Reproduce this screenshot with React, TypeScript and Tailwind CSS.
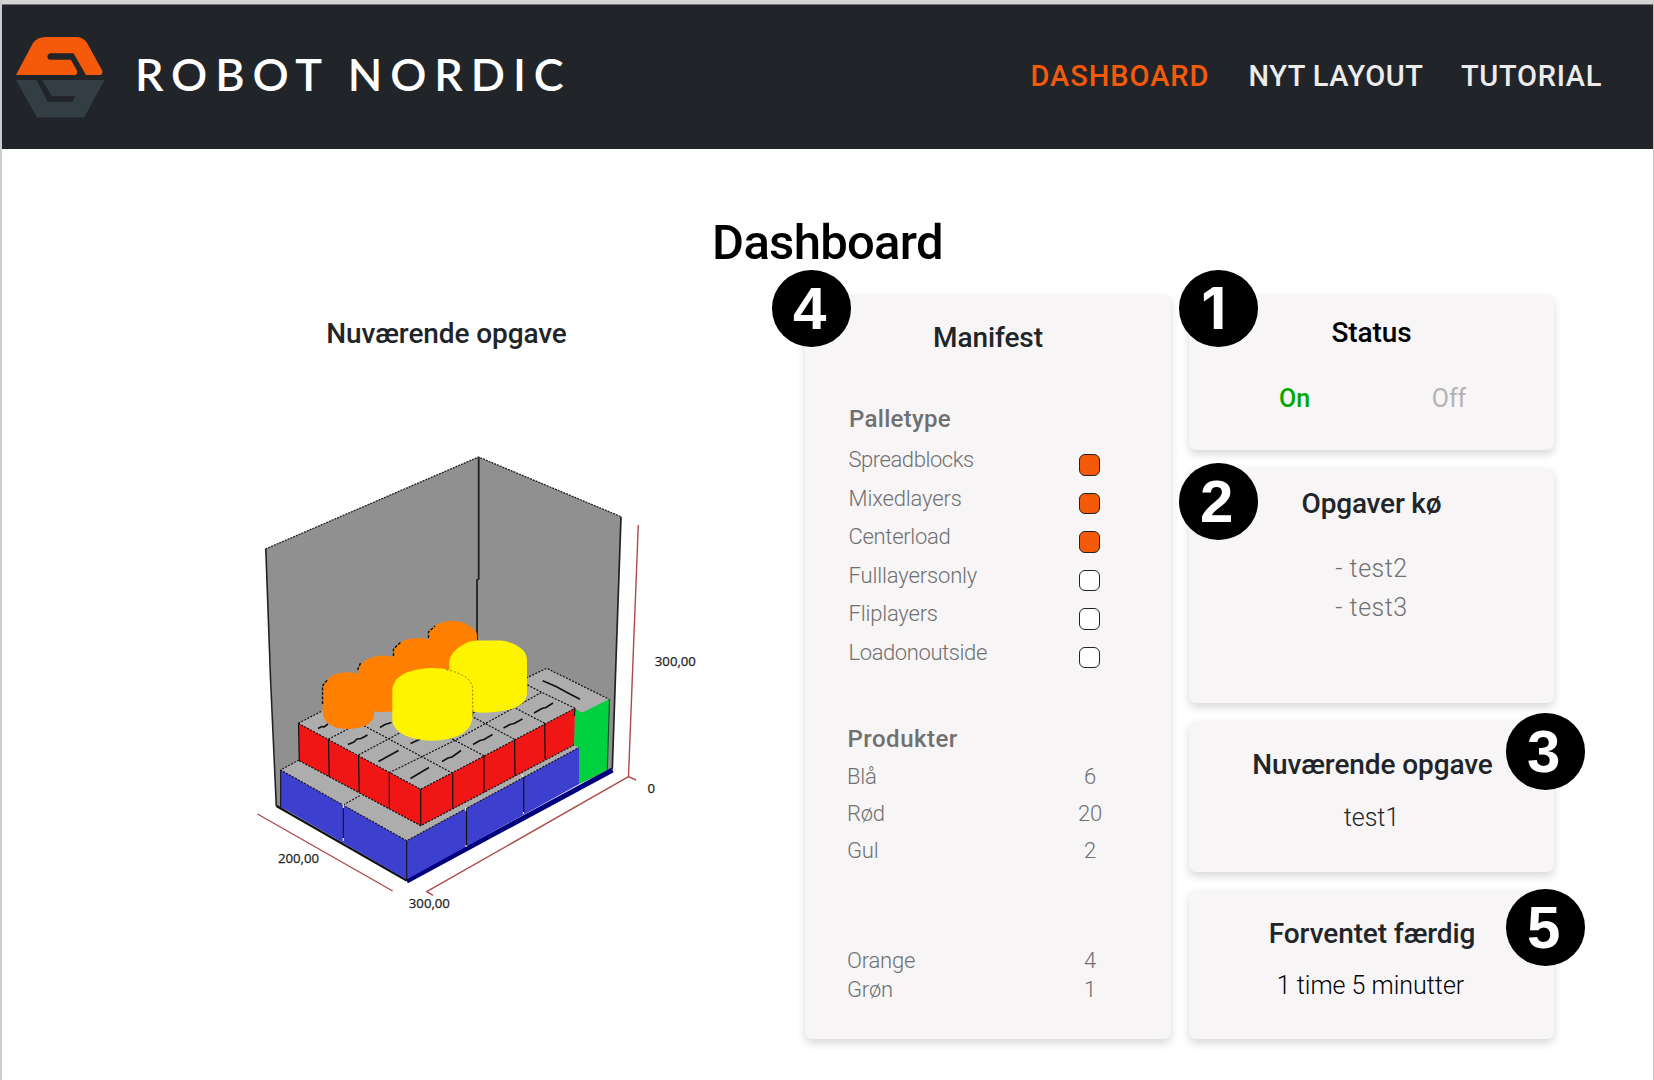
import type { ReactNode } from "react";

const palletTypes = [
  { label: "Spreadblocks", checked: true, tracking: "tracking-[-0.45px]" },
  { label: "Mixedlayers", checked: true, tracking: "tracking-[-0.15px]" },
  { label: "Centerload", checked: true, tracking: "tracking-[-0.3px]" },
  { label: "Fulllayersonly", checked: false, tracking: "tracking-[-0.15px]" },
  { label: "Fliplayers", checked: false, tracking: "tracking-[-0.2px]" },
  { label: "Loadonoutside", checked: false, tracking: "tracking-[-0.4px]" },
];

const products = [
  { label: "Blå", count: 6 },
  { label: "Rød", count: 20 },
  { label: "Gul", count: 2 },
];

const extraProducts = [
  { label: "Orange", count: 4 },
  { label: "Grøn", count: 1 },
];

function Logo() {
  return (
    <svg width="92" height="84" viewBox="14 35 92 84" className="block shrink-0">
      <path
        d="M16 75 L33 43 Q37 37 46 37 H76 Q83 37 87 42.7 L102.3 70.7 Q103 75 99.5 75 H86 L73.5 53.3 H50 Q47.3 54 47.3 56.5 Q47.3 59 50 59.7 H70.8 L77.2 71 Q77.5 75 74.5 75 Z"
        fill="#f55a0b"
      />
      <path
        d="M16 80 H36.4 L47.8 101.7 H72.7 L75 96 H51.7 L42 80 H104.5 L84.2 117.5 H37 Z"
        fill="#323d44"
      />
    </svg>
  );
}

function Badge({ n, className }: { n: number; className: string }) {
  return (
    <div
      className={`absolute flex h-[76.5px] w-[78.5px] items-center justify-center rounded-[50%] bg-black pr-[3px] leading-[76px] font-bold text-white ${
        n === 1
          ? "pr-[9px] font-['Inter'] text-[58px]"
          : "pt-px font-['Liberation_Sans'] text-[60px]"
      } ${className}`}
    >
      {n}
    </div>
  );
}

function Card({ className, children }: { className: string; children: ReactNode }) {
  return (
    <section
      className={`relative rounded-[7px] bg-[#f7f5f6] shadow-[0_4px_8px_rgba(0,0,0,0.16)] ${className}`}
    >
      {children}
    </section>
  );
}

function Title({ className = "", children }: { className?: string; children: ReactNode }) {
  return (
    <h2
      className={`text-center text-[28px] leading-10 font-medium tracking-[-0.1px] whitespace-nowrap ${className}`}
    >
      {children}
    </h2>
  );
}

const dashes = [
  "M318 728.5 L322 726.5 L324 727 L328 724",
  "M348 744.5 L354 742 L357 739 L361 738.5 L367.5 735",
  "M378.5 761.5 L398.5 750.5",
  "M410.5 778.5 L429 767.5",
  "M380 727.5 L385 724.5 L391.5 722.5",
  "M410.5 743.5 L421.5 738.5",
  "M442 761.5 L448 758 L452 757 L461 750.5",
  "M473 744.5 L480 740.5 L484 739.5 L492.5 734.5",
  "M503.5 728 L510 724.5 L514 723.5 L522.5 719",
  "M534 713 L542 708.5 L546 707.5 L553 703",
  "M472.5 713 L476 710.5",
];

function PalletScene() {
  return (
    <svg
      width="450"
      height="480"
      viewBox="250 450 450 480"
      className="block"
      strokeLinejoin="round"
    >
      {/* back walls */}
      <path d="M265.5 549 L478.5 457 L621 516.7 L612.3 769.3 L407 860 L276.5 806 Z" fill="#909090" />
      <path
        d="M265.5 549 L478.5 457 L621 516.7"
        fill="none"
        stroke="#222"
        strokeWidth="1.3"
        strokeDasharray="2 1"
      />
      <path d="M265.8 549 L270.5 678 L276.3 806" fill="none" stroke="#222" strokeWidth="1.6" />
      <path d="M621 516.7 L616 660 L612.3 769.3" fill="none" stroke="#222" strokeWidth="1.7" />
      <path d="M478.7 457 V579 L477 580 V640" fill="none" stroke="#222" strokeWidth="1.8" />

      {/* bottom layer: blue boxes */}
      <path d="M406.7 881 L612.5 770" stroke="#00007d" strokeWidth="5" />
      <path d="M276.5 806 L406.7 880.5" stroke="#111" strokeWidth="2.4" />
      <path d="M280.7 770 L299 760 L440 800 L575 744 L579.3 747.3 L406.7 840.7 Z" fill="#adadad" />
      <path d="M280.7 770 L406.7 840.7 V879.5 L280.7 806.7 Z" fill="#3d3fcf" />
      <path d="M406.7 840.7 L579.3 747.3 V784 L406.7 879.5 Z" fill="#3d3fcf" />
      <g fill="none" stroke="#111" strokeWidth="1.1">
        <path
          d="M299 760 L280.7 770 L406.7 840.7 L579.3 747.3 M343.3 805 L361 795"
          strokeDasharray="2 1.4"
        />
        <path d="M280.7 770 V807 M343.3 805 V841 M406.7 840.7 V880 M466.5 808 V846 M523.8 777 V814" />
      </g>
      <path
        d="M343.3 804 V808 M343.3 838 V841 M465.5 807 V811 M466 845 V847 M522.5 774 V777 M523.5 812 V814"
        stroke="#e8e4c8"
        strokeWidth="1.3"
      />

      {/* top surface of the second layer */}
      <path
        d="M298.3 723.3 L420.7 789.3 L575 708.3 L582 712.7 L609.3 699.3 L546.7 668.3 L527 678 L470 660 L400 670 Z"
        fill="#adadad"
      />

      {/* green box */}
      <path
        d="M575 709 L582 712.7 L609.3 699.3 L607 770 L579.3 784 V748 L574 745 Z"
        fill="#00d13f"
      />
      <path d="M609.5 699.3 L607.3 770" stroke="#0b5c22" strokeWidth="1.2" />

      {/* red boxes */}
      <path d="M298.3 723.3 L420.7 789.3 V825.7 L299.3 760.7 Z" fill="#f01616" />
      <path d="M420.7 789.3 L575 708.3 L574 745 L420.7 825.7 Z" fill="#f01616" />
      <g fill="none" stroke="#111" strokeWidth="1.2">
        <path
          strokeDasharray="2 1.4"
          d="M298.3 723.3 L420.7 789.3 L575 708.3 M299.3 760.7 L420.7 825.7 L574 745 M298.3 723.3 L322 711 M328.3 739.3 L362 721.5 M358.5 755 L480 690 M389.3 772.7 L455.7 740 L541.7 692.3 M452.7 773.3 L360 723.5 M484 755.7 L420 722 M514.5 739.3 L460 710 M544.7 723.3 L490 695 M575 708.3 L541.7 692.3 L520 681 M520 681 L546.7 668.3 L609.3 699.3"
        />
        <path d="M298.5 723 L299.3 761 M328.5 739.5 L329.2 777 M358.5 755 L359.2 792 M389.3 773 V808.5 M420.7 789 V826 M452.7 773.5 V809 M484 756 V792.5 M514.6 739.5 L515 775.5 M544.7 723.5 L545.2 759.5 M575 708.5 L574.3 716" />
        <path strokeWidth="1.6" d="M542.7 680.7 L556 686.5 L568 693 L580 699.3" />
        {dashes.map((d) => (
          <path key={d} d={d} strokeWidth="1.6" />
        ))}
      </g>

      {/* orange cylinders */}
      <g fill="#ff8000">
        <path d="M428.5 634 Q429 628 440 623 Q453 618.5 464 623 Q477 629 477 635 V675 H428.5 Z" />
        <path d="M393.5 652 Q394 645 405 640 Q416 636.5 427 639 Q444 644 444 655 V690 H393.5 Z" />
        <path d="M358.5 670 Q359 663 370 658 Q382 653.5 393 657 Q409 662 409 672 V704 Q398 713 380 712 Q358.5 710 358.5 700 Z" />
        <path d="M322.8 688 Q324 680 334 674.5 Q348 670 360 674.5 Q374 680 374 690 V716 Q372 724 362 727 Q348 731 334 727 Q322.8 722 322.8 712 Z" />
      </g>
      <g fill="none" stroke="#111" strokeWidth="1.4" strokeDasharray="3 1.5">
        <path d="M428.5 638 V632 L435 626" />
        <path d="M393.5 656 V649 L401 642" />
        <path d="M357.5 670 L361 662" />
        <path d="M322.5 704 V686 L328 679" />
      </g>

      {/* yellow cylinders */}
      <path
        d="M449.3 662 Q450 651 468 642 Q473 640.6 482 640.6 H500 Q510 641 519 647 Q527 652 527 660 V694 Q526 704 512 709 Q500 712.7 480 712.7 L450 708 Z"
        fill="#fff400"
      />
      <path
        d="M392.3 690 Q393 678 408 672 Q432 664.5 454 671 Q472.5 677 472.5 689 V718 Q471 731 455 737 Q432 744.5 409 737 Q393 731 392.3 720 Z"
        fill="#fff400"
      />
      <path
        d="M446 669.5 Q471 675 472.7 688 V716"
        fill="none"
        stroke="#7a7300"
        strokeWidth="0.9"
        strokeDasharray="2 2"
      />

      {/* axes */}
      <g fill="none" stroke="#ad4a4a" strokeWidth="1.4">
        <path d="M638.3 525 L633 660 L628.5 776.7 L636 780" />
        <path d="M628.5 776.7 L426.7 891.7 L433 895.3" />
        <path d="M257.5 814 L392.7 891" />
      </g>
      <g fontFamily="'Open Sans', sans-serif" fontSize="13.2" fill="#222" stroke="#222" strokeWidth="0.25">
        <text x="654.8" y="666">300,00</text>
        <text x="647.5" y="792.7">0</text>
        <text x="278" y="863.3">200,00</text>
        <text x="408.8" y="907.8">300,00</text>
      </g>
    </svg>
  );
}

export default function App() {
  return (
    <div className="flex h-[1080px] w-[1654px] flex-col overflow-hidden border-r border-l-2 border-r-[#c4c4c4] border-l-[#cdcdcd] bg-white font-['Roboto',sans-serif] text-[#212529]">
      <div className="h-1 shrink-0 bg-[#d4d4d4]" />
      <header className="flex h-[145px] shrink-0 items-start border-t border-[#777] bg-[#212429]">
        <div className="flex pt-[30px] pl-3">
          <Logo />
          <div className="pt-[11.5px] pl-[29px] font-['Lato',sans-serif] text-[45px] leading-[54px] font-semibold tracking-[7.9px] whitespace-nowrap text-white">
            ROBOT NORDIC
          </div>
        </div>
        <nav className="ml-auto flex pt-[51px] pr-[50px] text-[29px] leading-10 font-medium whitespace-nowrap text-[#ececec]">
          <a className="w-[218px] tracking-[0.95px] text-[#f55a0b]">DASHBOARD</a>
          <a className="w-[212.5px] tracking-[0.5px]">NYT LAYOUT</a>
          <a className="w-[142px] tracking-[0.7px]">TUTORIAL</a>
        </nav>
      </header>

      <main className="flex grow flex-col">
        <h1 className="mt-[65px] text-center text-[49px] leading-[58px] font-medium tracking-[-0.7px] text-black">
          Dashboard
        </h1>
        <div className="mt-[23px] flex">
          <section className="w-[803px] pt-[19px]">
            <Title className="pl-[86px]">Nuværende opgave</Title>
            <div className="mt-[96px] ml-[248px]">
              <PalletScene />
            </div>
          </section>

          <Card className="h-[744px] w-[366px] px-[44px] pt-[23px] text-[#707070]">
            <Badge n={4} className="-top-[25px] -left-[33px]" />
            <Title className="text-[#212529]">Manifest</Title>
            <h3 className="mt-[46px] text-2xl leading-[30px] font-medium tracking-[0.3px]">Palletype</h3>
            <ul className="mt-[7px] -ml-[0.5px] text-[22px] font-[350]">
              {palletTypes.map((p) => (
                <li key={p.label} className="flex h-[38.6px] justify-between pr-[27px] leading-[38px]">
                  <span className={p.tracking}>{p.label}</span>
                  <span
                    className={`mt-[13px] size-[21.5px] rounded-[6px] border-[1.5px] border-[#222] ${
                      p.checked ? "bg-[#f55a0b]" : "bg-white"
                    }`}
                  />
                </li>
              ))}
            </ul>
            <h3 className="mt-[51px] -ml-[1.5px] text-2xl leading-[30px] font-medium tracking-[0.5px]">
              Produkter
            </h3>
            <ul className="mt-[4.5px] -ml-[2px] text-[22px] leading-[37px] font-[350] tracking-[-0.2px]">
              {products.map((p) => (
                <li key={p.label} className="flex justify-between pr-[17px]">
                  <span>{p.label}</span>
                  <span className="w-10 text-center">{p.count}</span>
                </li>
              ))}
            </ul>
            <ul className="mt-[77px] -ml-[2px] text-[22px] leading-[29px] font-[350] tracking-[-0.2px]">
              {extraProducts.map((p) => (
                <li key={p.label} className="flex justify-between pr-[17px]">
                  <span>{p.label}</span>
                  <span className="w-10 text-center">{p.count}</span>
                </li>
              ))}
            </ul>
          </Card>

          <div className="ml-[18px] flex w-[365px] flex-col gap-[18px]">
            <Card className="h-[155px] pt-[18px]">
              <Badge n={1} className="-top-[25px] -left-[10px]" />
              <Title className="text-black">Status</Title>
              <div className="mt-[27px] flex pr-[28px] pl-[28px] text-center text-[25px] leading-[38px]">
                <span className="w-[157px] font-medium text-[#00a800]">On</span>
                <span className="w-[156px] text-[#b4b2b4]">Off</span>
              </div>
            </Card>
            <Card className="h-[235px] pt-[16px]">
              <Badge n={2} className="-top-[5px] -left-[10px]" />
              <Title className="tracking-[-0.2px]">Opgaver kø</Title>
              <ul className="mt-[25px] text-center text-[25px] leading-[39px] font-[350] tracking-[0.5px] text-[#707070]">
                <li>- test2</li>
                <li>- test3</li>
              </ul>
            </Card>
            <Card className="h-[151px] pt-[24px]">
              <Badge n={3} className="-top-[8px] left-[317px]" />
              <Title className="pl-[2px]">Nuværende opgave</Title>
              <p className="mt-[14px] text-center text-[25px] leading-[38px] font-[350]">test1</p>
            </Card>
            <Card className="h-[149px] pt-[24px]">
              <Badge n={5} className="-top-px left-[317px]" />
              <Title className="pl-[1px]">Forventet færdig</Title>
              <p className="mt-[13px] pr-[2px] text-center text-[25px] leading-[38px] font-[350] text-black">
                1 time 5 minutter
              </p>
            </Card>
          </div>
        </div>
      </main>
    </div>
  );
}
